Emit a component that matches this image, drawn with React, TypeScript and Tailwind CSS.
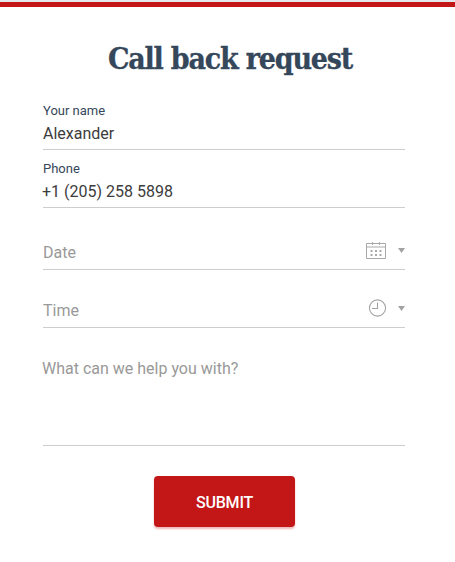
import React from 'react';

function CalendarIcon() {
  return (
    <svg width="20" height="17" viewBox="0 0 20 17" fill="none" stroke="#a9a9a9" className="block">
      <path d="M0.5 1.5H19.5V16.5H0.5Z M0.5 5H19.5" />
      <path d="M6.5 0V3M13.5 0V3" />
      <path d="M4.5 9H15.5M4.5 13H15.5" strokeWidth="2" strokeDasharray="2 2.5" />
    </svg>
  );
}

function ClockIcon() {
  return (
    <svg width="17" height="18" viewBox="0 0 17 18" fill="none" stroke="#a3a3a3" strokeWidth="1.1" className="block overflow-visible">
      <circle cx="8.5" cy="9" r="8.1" />
      <path d="M8.5 3.5V9.5H3" />
    </svg>
  );
}

function Caret() {
  return (
    <svg width="7" height="5" viewBox="0 0 7 5" fill="#a3a3a3" className="block">
      <path d="M0 0H7L3.5 5Z" />
    </svg>
  );
}

function FilledField({ label, value, className, valueClass }: { label: string; value: string; className: string; valueClass?: string }) {
  return (
    <div className={`flex flex-col border-b border-[#cdcdcd] ${className}`}>
      <span className="text-[13px] leading-4 text-[#35475a]">{label}</span>
      <span className={`mt-[5px] text-base leading-5 text-[#3c3c3c] ${valueClass ?? ''}`}>{value}</span>
    </div>
  );
}

function SelectField({ label, icon, className, iconClass }: { label: string; icon: React.ReactNode; className: string; iconClass: string }) {
  return (
    <div className={`flex items-start justify-between border-b border-[#cdcdcd] ${className}`}>
      <span className="text-base leading-5 text-[#999]">{label}</span>
      <span className={`flex h-5 items-center gap-3 ${iconClass}`}>
        {icon}
        <Caret />
      </span>
    </div>
  );
}

export default function App() {
  return (
    <main className="h-[562px] w-full overflow-hidden bg-white font-['Roboto',sans-serif]">
      <div className="h-[7px] border-t-2 border-[#e5e8ed] bg-[#c31617]" />
      <form className="ml-[43px] flex w-[362px] flex-col" onSubmit={(e) => e.preventDefault()}>
        <h1 className="flex h-[93px] justify-center whitespace-nowrap pt-8 pl-3 font-['Roboto_Slab','DejaVu_Serif_Condensed','DejaVu_Serif',serif] text-[30px] leading-10 font-bold tracking-[-1.2px] text-[#35475a] [-webkit-text-stroke:0.3px_#35475a]">
          Call back request
        </h1>
        <FilledField label="Your name" value="Alexander" className="h-[50px] pt-[3px]" />
        <FilledField label="Phone" value="+1 (205) 258 5898" className="h-[58px] pt-[11px]" valueClass="-ml-px" />
        <SelectField label="Date" icon={<CalendarIcon />} className="h-[62px] pt-[35px]" iconClass="-mt-[3px]" />
        <SelectField label="Time" icon={<ClockIcon />} className="h-[58px] pt-[31px]" iconClass="-mt-[3px]" />
        <div className="h-[118px] border-b border-[#cdcdcd] pt-[31px] text-base leading-5 text-[#999]">
          <span className="-ml-px">What can we help you with?</span>
        </div>
        <button
          type="submit"
          className="mt-[30px] ml-[111px] h-[51px] w-[141px] rounded-[4px] bg-[#c31617] pt-0.5 text-base font-medium tracking-[-0.2px] text-white shadow-[0_2px_2px_rgba(195,22,23,0.3)]"
        >
          SUBMIT
        </button>
      </form>
    </main>
  );
}
